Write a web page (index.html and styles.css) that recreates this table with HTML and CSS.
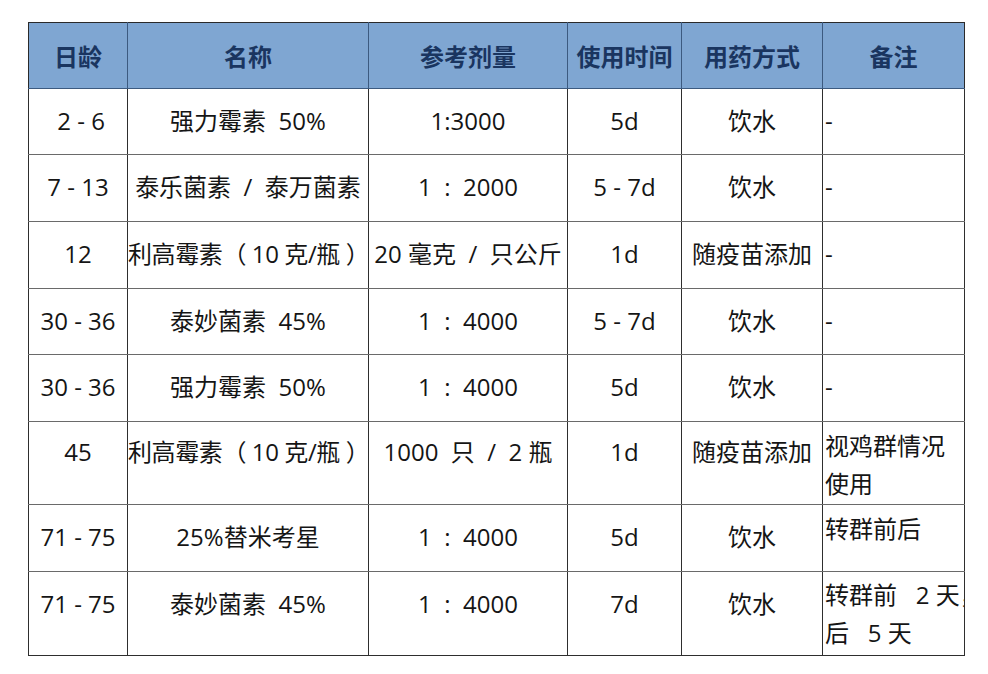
FILE: index.html
```html
<!DOCTYPE html>
<html lang="zh-CN">
<head>
<meta charset="utf-8">
<title>用药表</title>
<link rel="stylesheet" href="styles.css">
</head>
<body>
<table class="dose-table">
  <colgroup>
    <col class="c-age">
    <col class="c-name">
    <col class="c-dose">
    <col class="c-time">
    <col class="c-way">
    <col class="c-note">
  </colgroup>
  <thead>
    <tr class="head-row">
      <th>日龄</th>
      <th>名称</th>
      <th>参考剂量</th>
      <th>使用时间</th>
      <th>用药方式</th>
      <th>备注</th>
    </tr>
  </thead>
  <tbody>
    <tr class="row-a">
      <td> 2 - 6</td>
      <td>强力霉素  50%</td>
      <td>1:3000</td>
      <td>5d</td>
      <td>饮水</td>
      <td class="note">-</td>
    </tr>
    <tr class="row-b">
      <td>7 - 13</td>
      <td>泰乐菌素  /  泰万菌素</td>
      <td>1  :  2000</td>
      <td>5 - 7d</td>
      <td>饮水</td>
      <td class="note">-</td>
    </tr>
    <tr class="row-b">
      <td>12</td>
      <td class="tight">利高霉素（ 10 克/瓶 ）</td>
      <td>20 毫克  /  只公斤</td>
      <td>1d</td>
      <td>随疫苗添加</td>
      <td class="note">-</td>
    </tr>
    <tr class="row-a">
      <td>30 - 36</td>
      <td>泰妙菌素  45%</td>
      <td>1  :  4000</td>
      <td>5 - 7d</td>
      <td>饮水</td>
      <td class="note">-</td>
    </tr>
    <tr class="row-b">
      <td>30 - 36</td>
      <td>强力霉素  50%</td>
      <td>1  :  4000</td>
      <td>5d</td>
      <td>饮水</td>
      <td class="note">-</td>
    </tr>
    <tr class="row-tall">
      <td>45</td>
      <td class="tight">利高霉素（ 10 克/瓶 ）</td>
      <td>1000  只  /  2 瓶</td>
      <td>1d</td>
      <td>随疫苗添加</td>
      <td class="note multi">视鸡群情况<br>使用</td>
    </tr>
    <tr class="row-b">
      <td>71 - 75</td>
      <td>25%替米考星</td>
      <td>1  :  4000</td>
      <td>5d</td>
      <td>饮水</td>
      <td class="note multi">转群前后</td>
    </tr>
    <tr class="row-last">
      <td>71 - 75</td>
      <td>泰妙菌素  45%</td>
      <td>1  :  4000</td>
      <td>7d</td>
      <td>饮水</td>
      <td class="note multi">转群前   2 天，<br>后   5 天</td>
    </tr>
  </tbody>
</table>
</body>
</html>
```
FILE: styles.css
```css
html, body {
  margin: 0;
  padding: 0;
  background: #ffffff;
}

body {
  padding: 22px 0 0 28px;
  font-family: "Open Sans", "Noto Sans CJK SC", sans-serif;
  color: #151515;
}

.dose-table {
  border-collapse: collapse;
  table-layout: fixed;
  width: 936px;
  font-size: 24px;
}

.c-age { width: 99px; }
.c-name { width: 241px; }
.c-dose { width: 199px; }
.c-time { width: 114px; }
.c-way { width: 141px; }
.c-note { width: 142px; }

.head-row th {
  height: 65px;
  padding: 0;
  background: #7fa6d2;
  color: #1a3560;
  font-family: "Noto Sans CJK SC", sans-serif;
  font-weight: 700;
  font-size: 24px;
  text-align: center;
  vertical-align: middle;
  border: 1px solid #3c5a80;
  border-top-color: #2a2a2a;
  white-space: nowrap;
}

.head-row th:first-child { border-left-color: #2a2a2a; }
.head-row th:last-child { border-right-color: #2a2a2a; }

tbody td {
  padding: 12px 0 0 0;
  line-height: 40px;
  text-align: center;
  vertical-align: top;
  white-space: pre;
  overflow: hidden;
  border-left: 1px solid #2e2e2e;
  border-right: 1px solid #2e2e2e;
  border-top: 1px solid #6a6a6a;
  border-bottom: 1px solid #6a6a6a;
}

tbody td.tight {
  letter-spacing: -0.4px;
}

.row-a td { height: 53px; }
.row-b td { height: 54px; }
.row-tall td { height: 72px; padding-top: 10px; }
.row-last td { height: 71px; padding-top: 12px; }

tbody tr:last-child td { border-bottom-color: #2e2e2e; }

tbody td.note {
  text-align: left;
  padding-left: 2px;
}

tbody td.multi {
  padding-top: 5px;
  line-height: 38px;
}

.row-last td.multi { padding-top: 4px; }
```
